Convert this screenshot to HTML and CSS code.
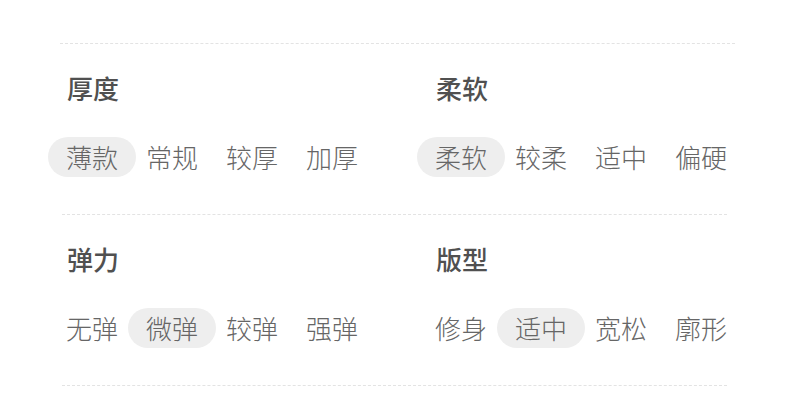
FILE: index.html
```html
<!DOCTYPE html>
<html lang="zh-CN">
<head>
    <meta charset="UTF-8">
    <meta name="viewport" content="width=device-width, initial-scale=1.0">
    <title>尺码参考</title>
    <link rel="stylesheet" href="styles.css">
</head>
<body>
    <div class="sheet">
        <div class="rule-top"></div>

        <!-- 厚度 / 柔软 -->
        <div class="group">
            <div class="cols">
                <div class="attr">
                    <div class="attr-name">厚度</div>
                    <div class="opts">
                        <span class="opt on">薄款</span>
                        <span class="opt">常规</span>
                        <span class="opt">较厚</span>
                        <span class="opt">加厚</span>
                    </div>
                </div>
                <div class="attr">
                    <div class="attr-name">柔软</div>
                    <div class="opts">
                        <span class="opt on">柔软</span>
                        <span class="opt">较柔</span>
                        <span class="opt">适中</span>
                        <span class="opt">偏硬</span>
                    </div>
                </div>
            </div>
        </div>

        <!-- 弹力 / 版型 -->
        <div class="group">
            <div class="cols">
                <div class="attr">
                    <div class="attr-name">弹力</div>
                    <div class="opts">
                        <span class="opt">无弹</span>
                        <span class="opt on">微弹</span>
                        <span class="opt">较弹</span>
                        <span class="opt">强弹</span>
                    </div>
                </div>
                <div class="attr">
                    <div class="attr-name">版型</div>
                    <div class="opts">
                        <span class="opt">修身</span>
                        <span class="opt on">适中</span>
                        <span class="opt">宽松</span>
                        <span class="opt">廓形</span>
                    </div>
                </div>
            </div>
        </div>
    </div>
</body>
</html>
```

FILE: styles.css
```css
body {
    margin: 0;
    background: #fff;
    font-family: "Noto Sans CJK SC", "Noto Sans", sans-serif;
    color: #666;
}
.sheet {
    padding-top: 43px;
}
.rule-top {
    margin-left: 60px;
    width: 675px;
    border-top: 1px dashed #e3e3e3;
}
.group {
    margin-left: 62px;
    width: 665px;
    padding: 29px 0 37px;
    border-bottom: 1px dashed #e3e3e3;
}
.cols {
    display: grid;
    grid-template-columns: 369px 369px;
    margin-left: -10px;
}
.attr {
    display: flex;
    flex-direction: column;
    gap: 34px;
}
.attr-name {
    padding-left: 15px;
    font-size: 26px;
    line-height: 30px;
    font-weight: 500;
    color: #505050;
}
.opts {
    display: flex;
}
.opt {
    width: 80px;
    flex: none;
    text-align: center;
    font-size: 26px;
    line-height: 40px;
    font-weight: 300;
    white-space: nowrap;
}
.opt.on {
    width: 88px;
    margin: 0 -4px;
    background-color: #eeeeee;
    border-radius: 20px;
}
```
